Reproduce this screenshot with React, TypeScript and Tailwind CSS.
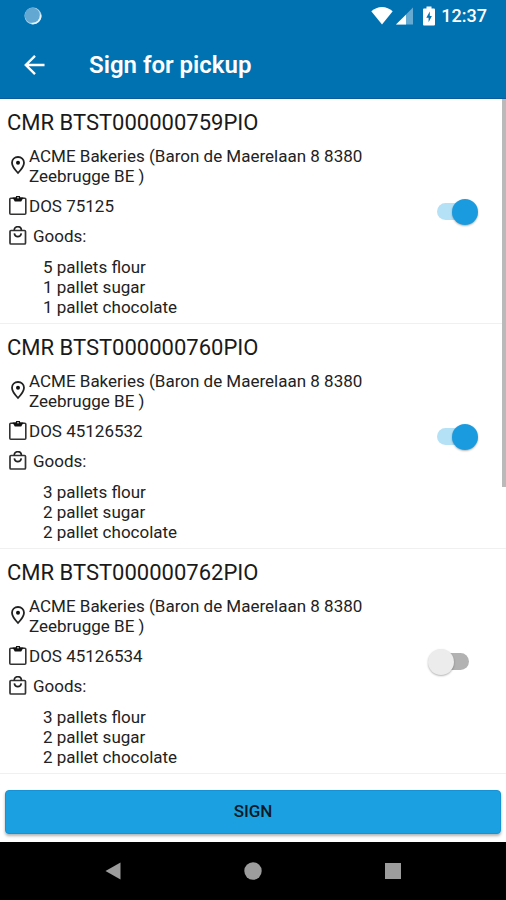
import { useState } from 'react';

const shipments = [
  {
    cmr: 'CMR BTST000000759PIO',
    address: 'ACME Bakeries (Baron de Maerelaan 8 8380 Zeebrugge BE )',
    dos: 'DOS 75125',
    goods: ['5 pallets flour', '1 pallet sugar', '1 pallet chocolate'],
    selected: true,
  },
  {
    cmr: 'CMR BTST000000760PIO',
    address: 'ACME Bakeries (Baron de Maerelaan 8 8380 Zeebrugge BE )',
    dos: 'DOS 45126532',
    goods: ['3 pallets flour', '2 pallet sugar', '2 pallet chocolate'],
    selected: true,
  },
  {
    cmr: 'CMR BTST000000762PIO',
    address: 'ACME Bakeries (Baron de Maerelaan 8 8380 Zeebrugge BE )',
    dos: 'DOS 45126534',
    goods: ['3 pallets flour', '2 pallet sugar', '2 pallet chocolate'],
    selected: false,
  },
];

type Shipment = (typeof shipments)[number];

function StatusBar() {
  return (
    <div className="flex h-8 items-center justify-between pl-6 pr-[19px] text-white">
      <svg className="h-[18px] w-[18px]" viewBox="0 0 18 18">
        <circle cx="9" cy="9" r="8.5" fill="#a9d5ee" />
        <circle cx="8.3" cy="8.3" r="7.6" fill="#62a8d3" />
        <path d="M16.6 7.5a8 8 0 0 1-9 9" fill="none" stroke="#e6f4fb" strokeWidth="1.5" />
      </svg>
      <div className="flex items-center">
        <svg className="h-[18px] w-[22px]" viewBox="0 0 22 18" fill="currentColor">
          <path d="M11 17.5.3 4.3C3.300 1.600 7 0 11 0s7.700 1.600 10.700 4.300z" />
        </svg>
        <svg className="ml-[3px] h-[18px] w-[17px]" viewBox="0 0 17 18" fill="currentColor">
          <path d="M17 .5v17H0z" opacity="0.4" />
          <path d="M10 7.700v9.800H0z" />
        </svg>
        <svg className="ml-[10px] h-5 w-3" viewBox="0 0 12 20">
          <path d="M3.5.5h5v2H11q1 0 1 1v15q0 1-1 1H1q-1 0-1-1v-15q0-1 1-1h2.500z" fill="#fff" />
          <path d="M6.800 5.500 3.300 11.800h2.300v4.400L8.900 10H6.800z" fill="#0072b2" />
        </svg>
        <span className="ml-[6px] text-lg font-medium leading-8">12:37</span>
      </div>
    </div>
  );
}

function PinIcon() {
  return (
    <svg className="h-5 w-[22px] shrink-0" viewBox="0 0 22 20" fill="none">
      <path
        d="M11 1C7.600 1 5 3.400 5 6.700 5 10.600 11 17 11 17s6-6.400 6-10.300C17 3.400 14.400 1 11 1z"
        stroke="#222"
        strokeWidth="1.8"
      />
      <circle cx="11" cy="6.7" r="2" fill="#111" />
    </svg>
  );
}

function ClipboardIcon() {
  return (
    <svg className="h-5 w-[22px] shrink-0" viewBox="0 0 22 20" fill="none">
      <rect x="2.8" y="2.3" width="16" height="16" rx="1" stroke="#333" strokeWidth="1.6" />
      <path d="M5.500 1.500h3.300a2.200 2.200 0 0 1 4.400 0h3.300L14.200 5.500H7.800z" fill="#111" />
      <circle cx="11" cy="1.7" r="0.8" fill="#fff" />
    </svg>
  );
}

function BagIcon() {
  return (
    <svg className="h-5 w-[22px] shrink-0" viewBox="0 0 22 20" fill="none">
      <rect x="3" y="4.500" width="15.500" height="13.5" rx="1" stroke="#333" strokeWidth="1.7" />
      <path d="M7.200 4.500C7.200 2 8.700.7 10.800.7s3.600 1.300 3.600 3.800" stroke="#222" strokeWidth="1.7" />
      <path d="M7.300 7.300c.4 2.200 1.700 3.300 3.500 3.300s3.100-1.100 3.500-3.300" stroke="#222" strokeWidth="1.7" />
    </svg>
  );
}

function Switch({ label, defaultChecked }: { label: string; defaultChecked: boolean }) {
  const [checked, setChecked] = useState(defaultChecked);

  return (
    <label className="relative flex h-[26px] w-[50px] shrink-0 cursor-pointer items-center justify-center">
      <input
        type="checkbox"
        role="switch"
        aria-label={label}
        className="peer sr-only"
        checked={checked}
        onChange={(e) => setChecked(e.target.checked)}
      />
      <span className="h-[17px] w-8 rounded-full bg-[#b2b2b2] peer-checked:bg-[#b5e1f6]" />
      <span className="absolute left-0 top-0 h-[26px] w-[26px] rounded-full bg-[#ececec] shadow-[0_1px_2px_rgba(0,0,0,0.3)] peer-checked:left-6 peer-checked:bg-[#1b9bdf]" />
    </label>
  );
}

function ShipmentRow({ shipment }: { shipment: Shipment }) {
  return (
    <li className="flex items-center justify-between border-b border-[#f0f0f0] pb-[6px] pl-[7px] pr-7 pt-[7px]">
      <div className="text-[17px] leading-5 text-[#222]">
        <h2 className="text-[22px] leading-[34px] text-[#1a1a1a]">{shipment.cmr}</h2>
        <div className="mt-[6px] flex items-center">
          <PinIcon />
          <p className="max-w-[360px]">{shipment.address}</p>
        </div>
        <div className="mt-[10px] flex items-center">
          <ClipboardIcon />
          <p>{shipment.dos}</p>
        </div>
        <div className="mt-[10px] flex items-center">
          <BagIcon />
          <p className="ml-1">Goods:</p>
        </div>
        <ul className="mt-[11px] pl-9">
          {shipment.goods.map((item) => (
            <li key={item}>{item}</li>
          ))}
        </ul>
      </div>
      <Switch label={`Select ${shipment.cmr}`} defaultChecked={shipment.selected} />
    </li>
  );
}

export default function App() {
  return (
    <div className="flex min-h-screen flex-col bg-white font-['Roboto','Liberation_Sans',sans-serif]">
      <header className="border-b border-[#0a5c9c] bg-[#0072b2] text-white">
        <StatusBar />
        <div className="flex h-[66px] items-center pl-6">
          <button type="button" aria-label="Back" className="h-6 w-[22px]">
            <svg className="h-6 w-[22px]" viewBox="0 0 22 24" fill="none" stroke="currentColor" strokeWidth="2.4">
              <path d="M20.500 12H2M11 2.800 1.800 12l9.200 9.200" />
            </svg>
          </button>
          <h1 className="ml-[43px] text-2xl font-semibold">Sign for pickup</h1>
        </div>
      </header>

      <main className="relative flex-1">
        <ul>
          {shipments.map((shipment) => (
            <ShipmentRow key={shipment.cmr} shipment={shipment} />
          ))}
        </ul>
        {/* Scroll thumb */}
        <div className="absolute right-0 top-0 h-[388px] w-1 bg-[#bababa]" />
      </main>

      <div className="px-[5px] pb-2 pt-2">
        <button
          type="button"
          className="h-11 w-full rounded-sm border border-[#1593d6] bg-[#1ba1e2] text-[17px] font-medium text-[#0c1a26] shadow-[0_2px_3px_rgba(0,0,0,0.3)]"
        >
          SIGN
        </button>
      </div>

      <nav className="flex h-[58px] items-center justify-center gap-[122px] bg-black text-[#9c9c9c]">
        <button type="button" aria-label="Back">
          <svg className="h-[18px] w-[18px]" viewBox="0 0 18 18" fill="currentColor">
            <path d="M16.500 .5v17L1.500 9z" />
          </svg>
        </button>
        <button type="button" aria-label="Home">
          <svg className="h-[18px] w-[18px]" viewBox="0 0 18 18" fill="currentColor">
            <circle cx="9" cy="9" r="8.7" />
          </svg>
        </button>
        <button type="button" aria-label="Recent apps">
          <svg className="h-[18px] w-[18px]" viewBox="0 0 18 18" fill="currentColor">
            <path d="M1 1h16v16H1z" />
          </svg>
        </button>
      </nav>
    </div>
  );
}
